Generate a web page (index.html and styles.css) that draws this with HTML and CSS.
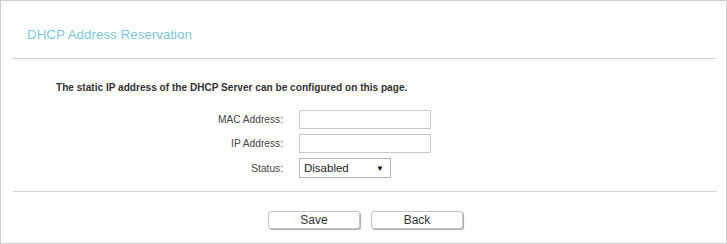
FILE: index.html
```html
<!DOCTYPE html>
<html>
<head>
<meta charset="utf-8">
<link rel="stylesheet" href="styles.css">
</head>
<body>
<div class="panel">
  <div class="header">
    <h1 class="title">DHCP Address Reservation</h1>
  </div>
  <div class="divider"></div>
  <p class="desc">The static IP address of the DHCP Server can be configured on this page.</p>
  <div class="form">
    <label class="label">MAC Address:</label>
    <input class="field" type="text">
    <label class="label">IP Address:</label>
    <input class="field" type="text">
    <label class="label">Status:</label>
    <div class="select"><span>Disabled</span><span class="arrow">▼</span></div>
  </div>
  <div class="divider divider-bottom"></div>
  <div class="buttons">
    <button class="btn">Save</button>
    <button class="btn">Back</button>
  </div>
</div>
</body>
</html>
```

FILE: styles.css
```css
html, body {
  margin: 0;
  padding: 0;
  background: #fff;
}
.panel {
  box-sizing: border-box;
  width: 727px;
  height: 244px;
  border: 1px solid #cfcfcf;
  font-family: "Liberation Sans", Arial, sans-serif;
  color: #333;
}
.header {
  height: 57px;
  display: flex;
  align-items: center;
  padding-left: 26px;
}
.title {
  margin: 0;
  padding-top: 9px;
  font-size: 13.4px;
  font-weight: normal;
  color: #7ccad8;
}
.divider {
  height: 0;
  border-top: 1px solid #d6d6d6;
  margin: 0 9px 0 12px;
}
.desc {
  margin: 22px 0 0 55px;
  font-size: 10.1px;
  font-weight: bold;
  color: #333;
  line-height: 13px;
}
.form {
  display: grid;
  grid-template-columns: 270px 132px;
  column-gap: 16px;
  row-gap: 5px;
  margin-top: 16px;
  margin-left: 12px;
  align-items: center;
}
.label {
  text-align: right;
  font-size: 10.2px;
  color: #444;
}
.field {
  box-sizing: border-box;
  width: 132px;
  height: 19px;
  margin: 0;
  border: 1px solid #c9c9c9;
  padding: 0;
  background: #fff;
}
.select {
  box-sizing: border-box;
  width: 92px;
  height: 20px;
  border: 1px solid #b5b5b5;
  display: flex;
  align-items: center;
  justify-content: space-between;
  padding: 0 6px 0 4px;
  font-size: 11.5px;
  color: #222;
}
.arrow {
  font-size: 8px;
  color: #111;
}
.divider-bottom {
  margin-top: 13px;
}
.buttons {
  display: flex;
  justify-content: center;
  gap: 11px;
  margin-top: 19px;
  padding-left: 4px;
}
.btn {
  box-sizing: border-box;
  width: 92px;
  height: 18px;
  margin: 0;
  padding: 0;
  border: 1px solid #c4c4c4;
  border-radius: 3px;
  background: #fff;
  box-shadow: 1px 1px 1px #aaa;
  font-family: "Liberation Sans", Arial, sans-serif;
  font-size: 12px;
  color: #333;
  line-height: 16px;
}
```
